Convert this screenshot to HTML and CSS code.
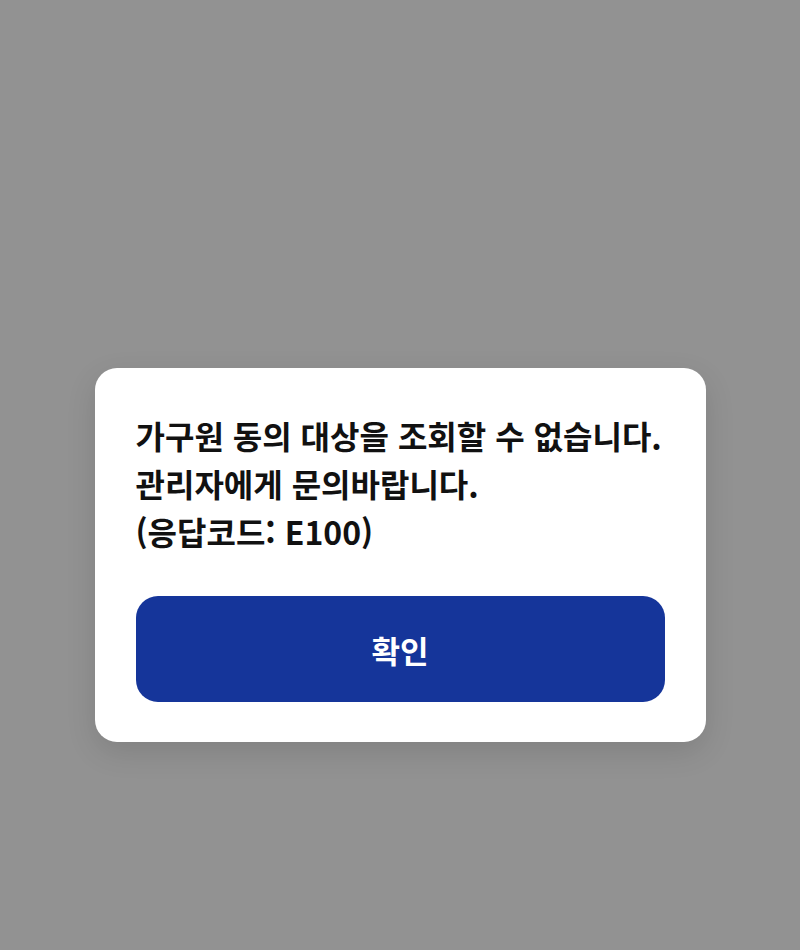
FILE: index.html
```html
<!DOCTYPE html>
<html lang="ko">
  <head>
    <meta charset="utf-8">
    <title>알림</title>
    <link rel="stylesheet" href="styles.css">
  </head>
  <body>
    <div class="dim">
      <div class="dialog">
        <p class="message">가구원 동의 대상을 조회할 수 없습니다.<br>관리자에게 문의바랍니다.<br>(응답코드: E100)</p>
        <button class="confirm">확인</button>
      </div>
    </div>
  </body>
</html>
```

FILE: styles.css
```css
html, body {
  margin: 0;
  height: 100%;
}

body {
  font-family: "Noto Sans CJK KR", "Noto Sans", sans-serif;
  background: #929292;
}

.dim {
  height: 100%;
  display: flex;
  align-items: flex-start;
  justify-content: center;
  padding-top: 368px;
  box-sizing: border-box;
}

.dialog {
  width: 611px;
  box-sizing: border-box;
  padding: 43px 41px 40px;
  background: #fff;
  border-radius: 22px;
  box-shadow: 0 10px 30px rgba(0, 0, 0, 0.12);
}

.message {
  margin: 0 0 41px;
  font-size: 32px;
  font-weight: bold;
  line-height: 48px;
  color: #111;
}

.confirm {
  display: block;
  width: 100%;
  height: 106px;
  border: none;
  border-radius: 22px;
  background: #15359a;
  color: #fff;
  font-family: inherit;
  font-size: 31px;
  font-weight: bold;
}
```
